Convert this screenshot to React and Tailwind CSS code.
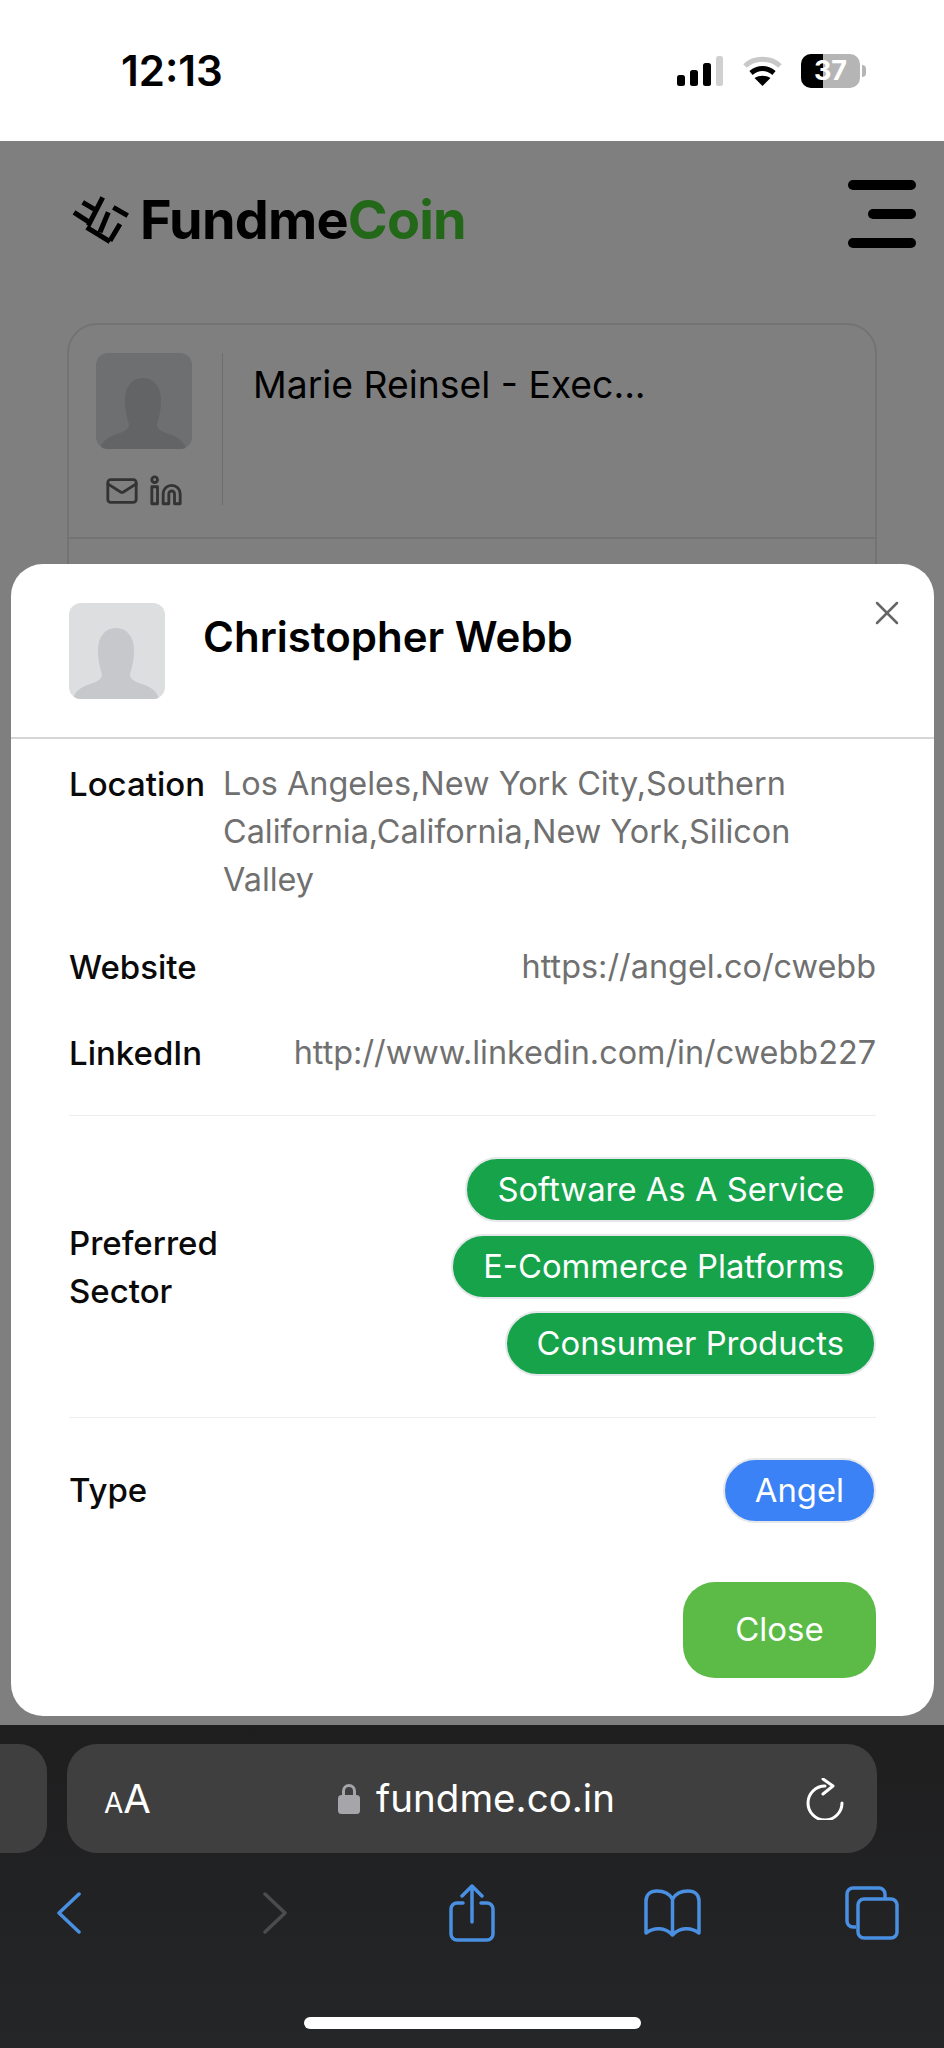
import React from 'react';
import { X, Mail, Linkedin } from 'lucide-react';

const sans = { fontFamily: 'Inter, "Liberation Sans", sans-serif' };

// 头像占位
const Avatar = () => (
  <div className="w-[96px] h-[96px] rounded-[12px] bg-[#dcdee0] overflow-hidden shrink-0">
    <svg viewBox="0 0 96 96" className="w-full h-full">
      <path d="M47 25c-11 0-18 9-18 22 0 10 2 18 4 24 0 5-3 7-12 10-9 3-15 7-17 15h86c-2-8-8-12-17-15-9-3-12-5-12-10 2-6 4-14 4-24 0-13-7-22-18-22z" fill="#c6c8cb" />
    </svg>
  </div>
);

const Logo = () => (
  <svg viewBox="0 0 58 48" className="w-[58px] h-[48px] shrink-0" fill="none" stroke="#000" strokeWidth="5">
    <path d="M30.7 1.3 16.3 29.7M10.7 6.3l14 8.4M2 16.3l14.3 9.4M14.7 31.3 38 45.7M28 36.3l8.3-20M38 44.7 48 28M41.3 11.3l14.4 8.4" />
  </svg>
);

const Row = ({ label, children, className = '' }) => (
  <div className={`flex justify-between items-center ${className}`}>
    <span className="text-[33px] leading-[48px] font-medium text-[#0a0a0a]">{label}</span>
    <span className="text-[32.4px] leading-[48px] text-[#707070]">{children}</span>
  </div>
);

const Pill = ({ color, children }) => (
  <span className={`h-[65px] px-[30px] rounded-full border-2 border-[#e5e7eb] text-white text-[32.8px] flex items-center ${color}`}>
    {children}
  </span>
);

const App = () => {
  return (
    <div className="relative w-[944px] h-[2048px] overflow-hidden bg-white flex flex-col" style={sans}>
      {/* 状态栏 */}
      <div className="h-[141px] shrink-0 bg-white flex items-center justify-between pl-[121px] pr-[78px]">
        <span className="text-[42px] leading-[50px] font-semibold text-black">12:13</span>
        <div className="flex items-center">
          <svg viewBox="0 0 46 30" className="w-[46px] h-[30px]">
            <rect x="0" y="19" width="8" height="11" rx="2.5" fill="#000" />
            <rect x="13" y="14" width="8" height="16" rx="2.5" fill="#000" />
            <rect x="26" y="7" width="8" height="23" rx="2.5" fill="#000" />
            <rect x="39" y="0" width="7" height="30" rx="2.5" fill="#d0d0d0" />
          </svg>
          <svg viewBox="0 0 39 30" className="w-[39px] h-[30px] ml-[20px]" fill="none">
            <path d="M2 10C11 1 28 1 37 10" stroke="#c8c8c8" strokeWidth="5" />
            <path d="M8 17c7-6 16-6 23 0" stroke="#000" strokeWidth="5" />
            <path d="M19.5 30l-8-8c5-3 11-3 16 0z" fill="#000" />
          </svg>
          <div className="relative w-[59px] h-[34px] ml-[19px] rounded-[10px] bg-[#b5b5b5] overflow-hidden flex items-center justify-center">
            <div className="absolute left-0 top-0 bottom-0 w-[22px] bg-black" />
            <span className="relative text-[27px] leading-none font-bold text-white">37</span>
          </div>
          <div className="w-[4px] h-[12px] ml-[2px] rounded-r-full bg-[#b5b5b5]" />
        </div>
      </div>

      {/* 页面内容 */}
      <div className="relative flex-1 bg-white pl-[67px] pr-[67px]">
        <div className="h-[182px] flex items-center justify-between -mr-[39px] pl-[5px] pb-[24px]">
          <div className="flex items-center gap-[10px]">
            <Logo />
            <span className="text-[54px] leading-none font-bold tracking-[-0.8px] text-black">
              Fundme<span className="text-[#47cf33]">Coin</span>
            </span>
          </div>
          <div className="flex flex-col items-end gap-[19px] mb-[12px]">
            <div className="w-[68px] h-[10px] rounded-full bg-black" />
            <div className="w-[48px] h-[10px] rounded-full bg-black" />
            <div className="w-[68px] h-[10px] rounded-full bg-black" />
          </div>
        </div>

        <div className="border-2 border-[#e6e6e6] rounded-[30px] h-[500px]">
          <div className="h-[214px] border-b-2 border-[#e6e6e6] flex pl-[27px] pt-[28px]">
            <div className="w-[96px] flex flex-col items-center">
              <Avatar />
              <div className="flex items-center gap-[10px] mt-[25px] text-[#666]">
                <Mail size={34} strokeWidth={2} />
                <Linkedin size={34} strokeWidth={2} />
              </div>
            </div>
            <div className="ml-[30px] h-[152px] border-l border-[#ddd] pl-[30px] pt-[4px] text-[37.3px] leading-[56px] text-black">
              Marie Reinsel - Exec...
            </div>
          </div>
        </div>

        {/* 遮罩 */}
        <div className="absolute inset-0 bg-black/50" />

        {/* 弹窗 */}
        <div className="absolute left-[11px] right-[10px] top-[423px] h-[1152px] rounded-[32px] bg-white flex flex-col">
          <div className="h-[175px] shrink-0 border-b-2 border-[#d6d6d6] relative flex items-start pl-[58px] pt-[39px]">
            <Avatar />
            <div className="ml-[38px] mt-[9px] text-[42px] leading-[50px] font-semibold text-black">Christopher Webb</div>
            <X size={40} strokeWidth={1.5} className="absolute right-[27px] top-[29px] text-[#666]" />
          </div>

          <div className="flex-1 px-[58px]">
            <div className="flex pt-[21px]">
              <span className="w-[154px] shrink-0 text-[33px] leading-[48px] font-medium text-[#0a0a0a]">Location</span>
              <span className="text-[32.4px] leading-[48px] text-[#707070]">Los Angeles,New York City,Southern California,California,New York,Silicon Valley</span>
            </div>
            <Row label="Website" className="mt-[39px]">https://angel.co/cwebb</Row>
            <Row label="LinkedIn" className="mt-[38px]">http://www.linkedin.com/in/cwebb227</Row>

            <div className="mt-[38px] border-t border-[#eee] flex justify-between items-center py-[41px]">
              <span className="w-[180px] text-[33px] leading-[48px] font-medium text-[#0a0a0a]">Preferred Sector</span>
              <div className="flex flex-col items-end gap-[12px]">
                <Pill color="bg-[#16a34a]">Software As A Service</Pill>
                <Pill color="bg-[#16a34a]">E-Commerce Platforms</Pill>
                <Pill color="bg-[#16a34a]">Consumer Products</Pill>
              </div>
            </div>

            <div className="border-t border-[#eee] flex justify-between items-center pt-[40px]">
              <span className="text-[33px] leading-[48px] font-medium text-[#0a0a0a] mb-[1px]">Type</span>
              <Pill color="bg-[#3b82f6]">Angel</Pill>
            </div>

            <div className="flex justify-end mt-[59px]">
              <button className="w-[193px] h-[96px] rounded-[32px] bg-[#5cbb47] text-white text-[33px]">Close</button>
            </div>
          </div>
        </div>
      </div>

      {/* Safari 工具栏 */}
      <div className="h-[323px] shrink-0 bg-linear-to-b from-[#1e1e1f] to-[#252628] pt-[19px] relative">
        <div className="flex gap-[20px] -ml-[30px]">
          <div className="w-[77px] h-[109px] rounded-r-[28px] bg-[#3f3f40]" />
          <div className="w-[810px] h-[109px] rounded-[30px] bg-[#3f3f40] flex items-center justify-between pl-[37px] pr-[33px] text-white">
            <span className="leading-none"><span className="text-[28px]">A</span><span className="text-[40px]">A</span></span>
            <div className="flex items-center gap-[16px] -ml-[4px]">
              <svg viewBox="0 0 22 31" className="w-[22px] h-[31px]" fill="none">
                <path d="M5.5 13V8a5.5 5.5 0 0 1 11 0v5" stroke="#a5a5aa" strokeWidth="3" />
                <rect x="0" y="12" width="22" height="19" rx="3.5" fill="#a5a5aa" />
              </svg>
              <span className="text-[38.5px] leading-none">fundme.co.in</span>
            </div>
            <svg viewBox="0 0 38 42" className="w-[38px] h-[42px]" fill="none" stroke="#fff" strokeWidth="3" strokeLinecap="round" strokeLinejoin="round">
              <path d="M19 8A17 17 0 1 0 36 25" />
              <path d="M17 1l10 7-10 8" />
            </svg>
          </div>
        </div>

        <div className="flex items-center pl-[57px] mt-[30px] h-[60px]">
          <svg viewBox="0 0 24 42" className="w-[24px] h-[42px]" fill="none" stroke="#4a90e2" strokeWidth="3.5" strokeLinecap="round" strokeLinejoin="round">
            <path d="M22 2 2 21l20 19" />
          </svg>
          <svg viewBox="0 0 24 42" className="w-[24px] h-[42px] ml-[182px]" fill="none" stroke="#4b4c4e" strokeWidth="3.5" strokeLinecap="round" strokeLinejoin="round">
            <path d="M2 2l20 19L2 40" />
          </svg>
          <svg viewBox="0 0 46 58" className="w-[46px] h-[58px] ml-[162px]" fill="none" stroke="#4a90e2" strokeWidth="3.5" strokeLinecap="round" strokeLinejoin="round">
            <path d="M14 19H8a6 6 0 0 0-6 6v25a6 6 0 0 0 6 6h30a6 6 0 0 0 6-6V25a6 6 0 0 0-6-6h-6" />
            <path d="M23 38V2M13 12 23 2l10 10" />
          </svg>
          <svg viewBox="0 0 57 48" className="w-[57px] h-[48px] ml-[149px]" fill="none" stroke="#4a90e2" strokeWidth="3.5" strokeLinecap="round" strokeLinejoin="round">
            <path d="M28.5 44V10C25 4 20 2 13 2 6 2 2 6 2 12v32c8-6 19-6 26.5 2 7.5-8 18.5-8 26.5-2V12c0-6-4-10-11-10-7 0-12 2-15.5 8" />
          </svg>
          <svg viewBox="0 0 54 54" className="w-[54px] h-[54px] ml-[144px]" fill="none" stroke="#4a90e2" strokeWidth="3.5" strokeLinejoin="round">
            <path d="M11 41H8a6 6 0 0 1-6-6V8a6 6 0 0 1 6-6h26a6 6 0 0 1 6 6v4" />
            <rect x="13" y="13" width="39" height="39" rx="6" />
          </svg>
        </div>

        <div className="mt-[74px] mx-auto w-[337px] h-[12px] rounded-full bg-white" />
      </div>
    </div>
  );
};

export default App;
